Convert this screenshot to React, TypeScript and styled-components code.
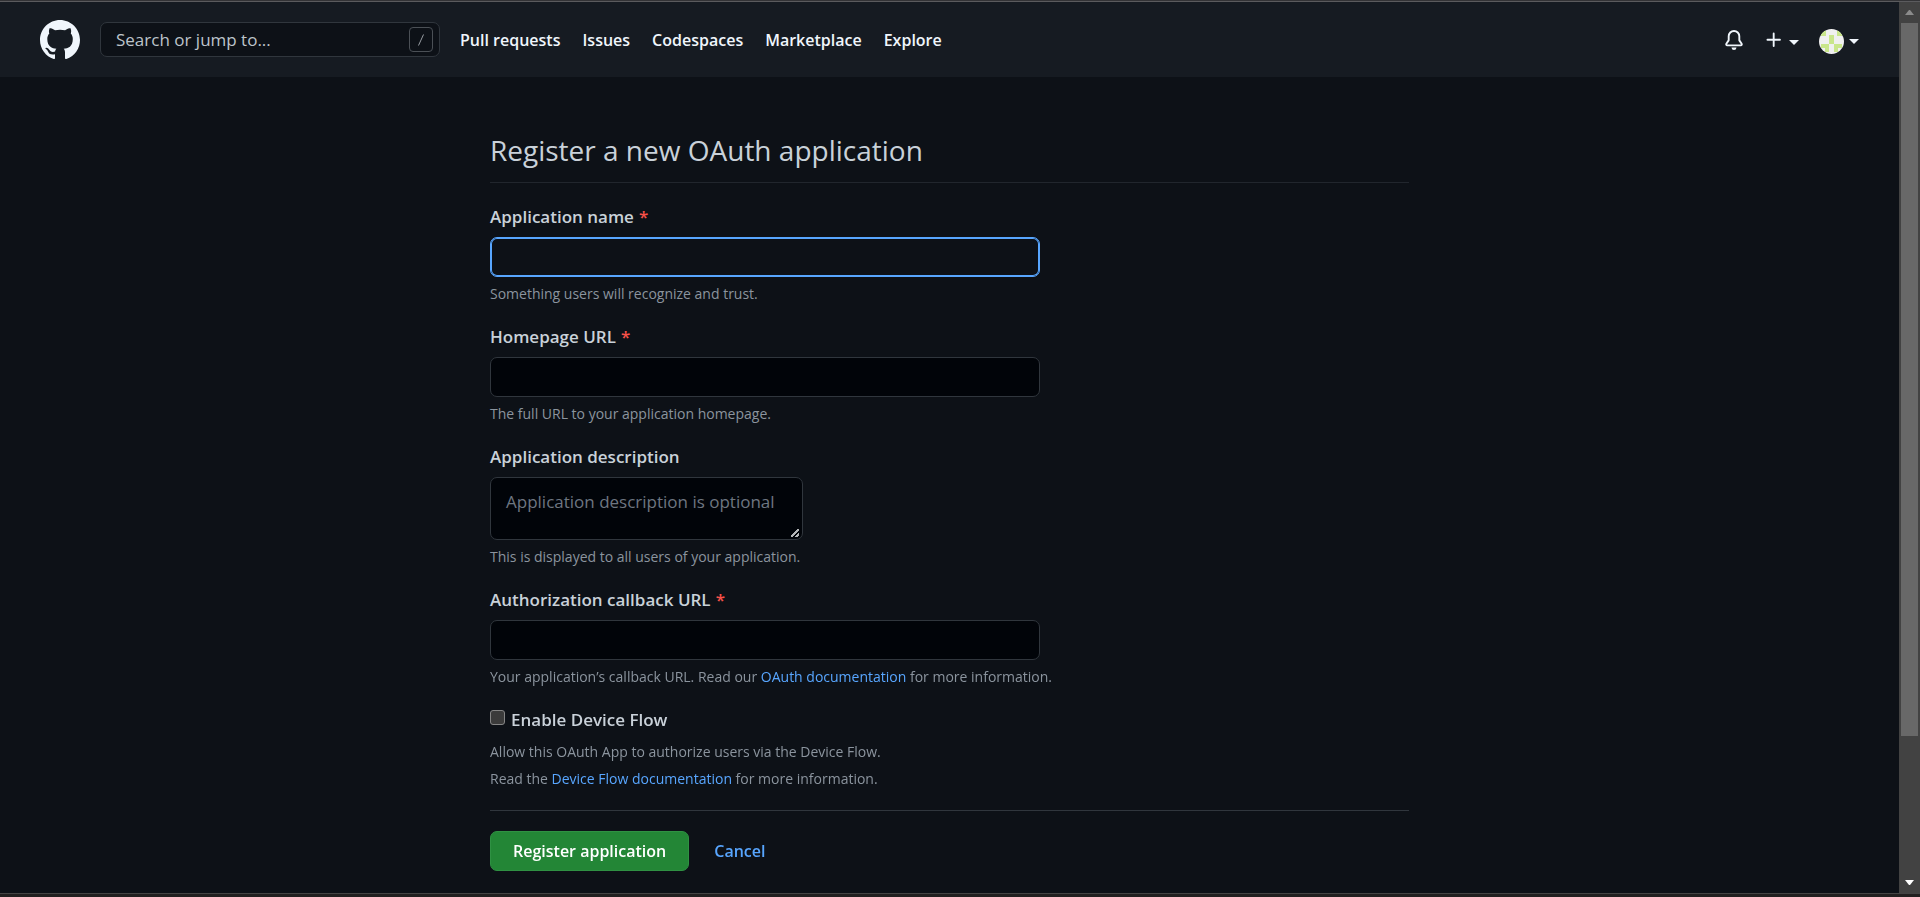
import React from 'react';
import styled, { createGlobalStyle, css } from 'styled-components';

const GlobalStyle = createGlobalStyle`
  *, *::before, *::after { box-sizing: border-box; }
  body {
    margin: 0;
    background: #0d1117;
    color: #c9d1d9;
    font-family: 'Segoe UI', 'Open Sans', 'Noto Sans', sans-serif;
    font-size: 17px;
    line-height: 26px;
  }
`;

const Frame = styled.div`
  display: flex;
  flex-direction: column;
  min-height: 100vh;
  border-top: 1px solid #333336;
`;

const Viewport = styled.div`
  display: flex;
  flex: 1;
  border-top: 1px solid #5b5b5e;
`;

const BottomEdge = styled.div`
  height: 5px;
  border-top: 1px solid #444444;
  background: #222020;
`;

const Page = styled.div`
  flex: 1;
  min-width: 0;
`;

const Header = styled.header`
  display: flex;
  align-items: center;
  gap: 20px;
  height: 75px;
  padding: 0 40px;
  background: #161b22;
`;

const IconLink = styled.a`
  display: flex;
  color: #f0f6fc;
`;

const SearchBox = styled.label`
  display: flex;
  align-items: center;
  width: 340px;
  height: 35px;
  padding: 0 6px 0 15px;
  border: 1px solid #30363d;
  border-radius: 7px;
  background: #0d1117;
`;

const SearchInput = styled.input`
  flex: 1;
  min-width: 0;
  padding: 0;
  border: 0;
  outline: 0;
  background: none;
  color: #c9d1d9;
  font: inherit;
  &::placeholder { color: #bdc4cb; opacity: 1; }
`;

const Nav = styled.nav`
  display: flex;
  gap: 22px;
`;

const NavLink = styled.a`
  color: #f0f6fc;
  font-size: 16px;
  font-weight: 600;
  text-decoration: none;
`;

const Actions = styled.div`
  display: flex;
  align-items: center;
  gap: 20px;
  margin-left: auto;
`;

const ActionButton = styled.button`
  display: flex;
  align-items: center;
  gap: 5px;
  padding: 0;
  border: 0;
  background: none;
  color: #f0f6fc;
`;

const ProfileButton = styled(ActionButton)`
  padding-top: 3px;
`;

const Caret = styled.span<{ $low?: boolean }>`
  margin-top: ${({ $low }) => ($low ? '6px' : '0')};
  border: 5px solid transparent;
  border-top-color: currentColor;
  border-bottom: 0;
`;

const Main = styled.main`
  max-width: 919px;
  margin: 0 auto;
  padding: 51px 0 22px;
`;

const Title = styled.h1`
  margin: 0 0 21px;
  padding-bottom: 9px;
  border-bottom: 1px solid #21262d;
  font-size: 28px;
  font-weight: 400;
  line-height: 45px;
`;

const Group = styled.div`
  display: flex;
  flex-direction: column;
  align-items: flex-start;
  margin-bottom: 19px;
`;

const Label = styled.label`
  margin-bottom: 7px;
  font-weight: 600;
`;

const Required = styled.span`
  margin-left: 5px;
  color: #f85149;
`;

const fieldStyle = css`
  border: 1px solid #30363d;
  border-radius: 7px;
  outline: 0;
  background: #010409;
  color: #c9d1d9;
  font: inherit;
  &:focus {
    border-color: #58a6ff;
    background: #0d1117;
    box-shadow: inset 0 0 0 1px #58a6ff;
  }
`;

const TextField = styled.input`
  ${fieldStyle}
  width: 550px;
  max-width: 100%;
  height: 40px;
  padding: 0 15px;
`;

const TextArea = styled.textarea`
  ${fieldStyle}
  width: 313px;
  height: 63px;
  padding: 11px 15px;
  color-scheme: dark;
  &::placeholder { color: #6e7681; opacity: 1; }
  &::-webkit-resizer {
    background: linear-gradient(
      135deg,
      transparent 42%,
      #b4b6b8 42% 57%,
      transparent 57% 72%,
      #b4b6b8 72% 88%,
      transparent 88%
    ) no-repeat right 3px bottom 2px / 8px 8px;
  }
`;

const Note = styled.p`
  margin: 6px 0 0;
  color: #8b949e;
  font-size: 14px;
  line-height: 22px;
`;

const Paragraph = styled(Note)`
  margin-top: 5px;
  line-height: 27px;
`;

const TextLink = styled.a`
  color: #58a6ff;
  text-decoration: none;
`;

const CheckRow = styled.div`
  display: flex;
  gap: 6px;
`;

const CheckLabel = styled.label`
  font-weight: 600;
`;

const CheckBox = styled.input`
  appearance: none;
  width: 15px;
  height: 15px;
  margin: 3px 0 0;
  border: 1px solid #858585;
  border-radius: 3px;
  background: #3b3b3b;
`;

const FormActions = styled.div`
  display: flex;
  align-items: center;
  gap: 25px;
  margin-top: 18px;
  padding-top: 20px;
  border-top: 1px solid #30363d;
  font-size: 16px;
  font-weight: 600;
`;

const SubmitButton = styled.button`
  height: 40px;
  padding: 0 22px;
  border: 1px solid #2f9143;
  border-radius: 7px;
  background: #238636;
  color: #ffffff;
  font: inherit;
`;

const ScrollTrack = styled.div`
  display: flex;
  flex-direction: column;
  align-items: center;
  width: 21px;
  background: #424242;
`;

const ScrollArrow = styled.span<{ $dim?: boolean }>`
  display: flex;
  align-items: center;
  justify-content: center;
  height: 21px;
  color: ${({ $dim }) => ($dim ? '#8b8b8b' : '#ffffff')};
`;

const ScrollRange = styled.div`
  flex: 1;
  width: 17px;
`;

const ScrollThumb = styled.div`
  height: 84%;
  background: #686868;
`;

const MarkIcon = () => (
  <svg width="40" height="40" viewBox="0 0 16 16" fill="currentColor" aria-hidden="true">
    <path fillRule="evenodd" d="M8 0C3.58 0 0 3.58 0 8c0 3.54 2.29 6.53 5.47 7.59.4.07.55-.17.55-.38 0-.19-.01-.82-.01-1.49-2.01.37-2.53-.49-2.69-.94-.09-.23-.48-.94-.82-1.13-.28-.15-.68-.52-.01-.53.63-.01 1.08.58 1.23.82.72 1.21 1.87.87 2.33.66.07-.52.28-.87.51-1.07-1.78-.2-3.64-.89-3.64-3.95 0-.87.31-1.59.82-2.15-.08-.2-.36-1.02.08-2.12 0 0 .67-.21 2.2.82.64-.18 1.32-.27 2-.27.68 0 1.36.09 2 .27 1.53-1.04 2.2-.82 2.2-.82.44 1.1.16 1.92.08 2.12.51.56.82 1.27.82 2.15 0 3.07-1.87 3.75-3.65 3.95.29.25.54.73.54 1.48 0 1.07-.01 1.93-.01 2.2 0 .21.15.46.55.38A8.013 8.013 0 0016 8c0-4.42-3.58-8-8-8z" />
  </svg>
);

const SlashKeyIcon = () => (
  <svg width="24" height="25" viewBox="0 0 24 25" fill="none" aria-hidden="true">
    <rect x="0.5" y="0.5" width="23" height="24" rx="3.5" stroke="#4b5056" />
    <path d="M14.5 7.5l-5 11" stroke="#979ca2" />
  </svg>
);

const BellIcon = () => (
  <svg width="20" height="20" viewBox="0 0 16 16" fill="currentColor" aria-hidden="true">
    <path d="M8 16a2 2 0 001.985-1.75c.017-.137-.097-.25-.235-.25h-3.5c-.138 0-.252.113-.235.25A2 2 0 008 16z" />
    <path fillRule="evenodd" d="M8 1.5A3.5 3.5 0 004.5 5v2.947c0 .346-.102.683-.294.97l-1.703 2.556a.018.018 0 00-.003.01l.001.006c0 .002.002.004.004.006a.017.017 0 00.006.004l.007.001h10.964l.007-.001a.016.016 0 00.006-.004.016.016 0 00.004-.006l.001-.007a.017.017 0 00-.003-.01l-1.703-2.554a1.75 1.75 0 01-.294-.97V5A3.5 3.5 0 008 1.5zM3 5a5 5 0 0110 0v2.947c0 .05.015.098.042.139l1.703 2.555A1.518 1.518 0 0113.482 13H2.518a1.518 1.518 0 01-1.263-2.36l1.703-2.554A.25.25 0 003 7.947V5z" />
  </svg>
);

const PlusIcon = () => (
  <svg width="20" height="20" viewBox="0 0 16 16" fill="currentColor" aria-hidden="true">
    <path d="M7.75 2a.75.75 0 01.75.75V7h4.25a.75.75 0 110 1.5H8.5v4.25a.75.75 0 11-1.5 0V8.5H2.75a.75.75 0 010-1.5H7V2.75A.75.75 0 017.75 2z" />
  </svg>
);

const Avatar = () => (
  <svg width="25" height="25" viewBox="0 0 25 25" aria-hidden="true">
    <clipPath id="avatar-clip"><circle cx="12.5" cy="12.5" r="12.5" /></clipPath>
    <g clipPath="url(#avatar-clip)">
      <rect width="25" height="25" fill="#f0f0f0" />
      <path fill="#c9e68b" d="M2 2h5v5H2zM18 2h5v5h-5zM10 6h5v9h-5zM2 15h8v4H2zM15 15h8v4h-8zM6 19h4v4H6zM15 19h4v4h-4z" />
    </g>
  </svg>
);

const ArrowIcon = ({ up }: { up?: boolean }) => (
  <svg width="9" height="5" viewBox="0 0 9 5" fill="currentColor" aria-hidden="true">
    <path d={up ? 'M4 0h1l4 5H0z' : 'M0 0h9L5 5H4z'} />
  </svg>
);

const navItems = ['Pull requests', 'Issues', 'Codespaces', 'Marketplace', 'Explore'];

interface FieldProps {
  id: string;
  label: string;
  required?: boolean;
  note: React.ReactNode;
  children: React.ReactNode;
}

const Field = ({ id, label, required, note, children }: FieldProps) => (
  <Group>
    <Label htmlFor={id}>
      {label}
      {required && <Required>*</Required>}
    </Label>
    {children}
    <Note>{note}</Note>
  </Group>
);

export default function App() {
  return (
    <Frame>
      <GlobalStyle />
      <Viewport>
        <Page>
          <Header>
            <IconLink href="#" aria-label="Homepage"><MarkIcon /></IconLink>
            <SearchBox>
              <SearchInput type="text" placeholder="Search or jump to..." aria-label="Search or jump to" />
              <SlashKeyIcon />
            </SearchBox>
            <Nav>
              {navItems.map((item) => <NavLink key={item} href="#">{item}</NavLink>)}
            </Nav>
            <Actions>
              <IconLink href="#" aria-label="Notifications"><BellIcon /></IconLink>
              <ActionButton type="button" aria-label="Create new"><PlusIcon /><Caret $low /></ActionButton>
              <ProfileButton type="button" aria-label="Your profile"><Avatar /><Caret /></ProfileButton>
            </Actions>
          </Header>
          <Main>
            <Title>Register a new OAuth application</Title>
            <form onSubmit={(event) => event.preventDefault()}>
              <Field id="name" label="Application name" required note="Something users will recognize and trust.">
                <TextField id="name" type="text" autoFocus />
              </Field>
              <Field id="homepage" label="Homepage URL" required note="The full URL to your application homepage.">
                <TextField id="homepage" type="text" />
              </Field>
              <Field id="description" label="Application description" note="This is displayed to all users of your application.">
                <TextArea id="description" placeholder="Application description is optional" />
              </Field>
              <Field
                id="callback"
                label="Authorization callback URL"
                required
                note={<>Your application’s callback URL. Read our <TextLink href="#">OAuth documentation</TextLink> for more information.</>}
              >
                <TextField id="callback" type="text" />
              </Field>
              <CheckRow>
                <CheckBox id="device-flow" type="checkbox" />
                <CheckLabel htmlFor="device-flow">Enable Device Flow</CheckLabel>
              </CheckRow>
              <Paragraph>
                Allow this OAuth App to authorize users via the Device Flow.<br />
                Read the <TextLink href="#">Device Flow documentation</TextLink> for more information.
              </Paragraph>
              <FormActions>
                <SubmitButton type="submit">Register application</SubmitButton>
                <TextLink href="#">Cancel</TextLink>
              </FormActions>
            </form>
          </Main>
        </Page>
        <ScrollTrack aria-hidden="true">
          <ScrollArrow $dim><ArrowIcon up /></ScrollArrow>
          <ScrollRange><ScrollThumb /></ScrollRange>
          <ScrollArrow><ArrowIcon /></ScrollArrow>
        </ScrollTrack>
      </Viewport>
      <BottomEdge />
    </Frame>
  );
}
